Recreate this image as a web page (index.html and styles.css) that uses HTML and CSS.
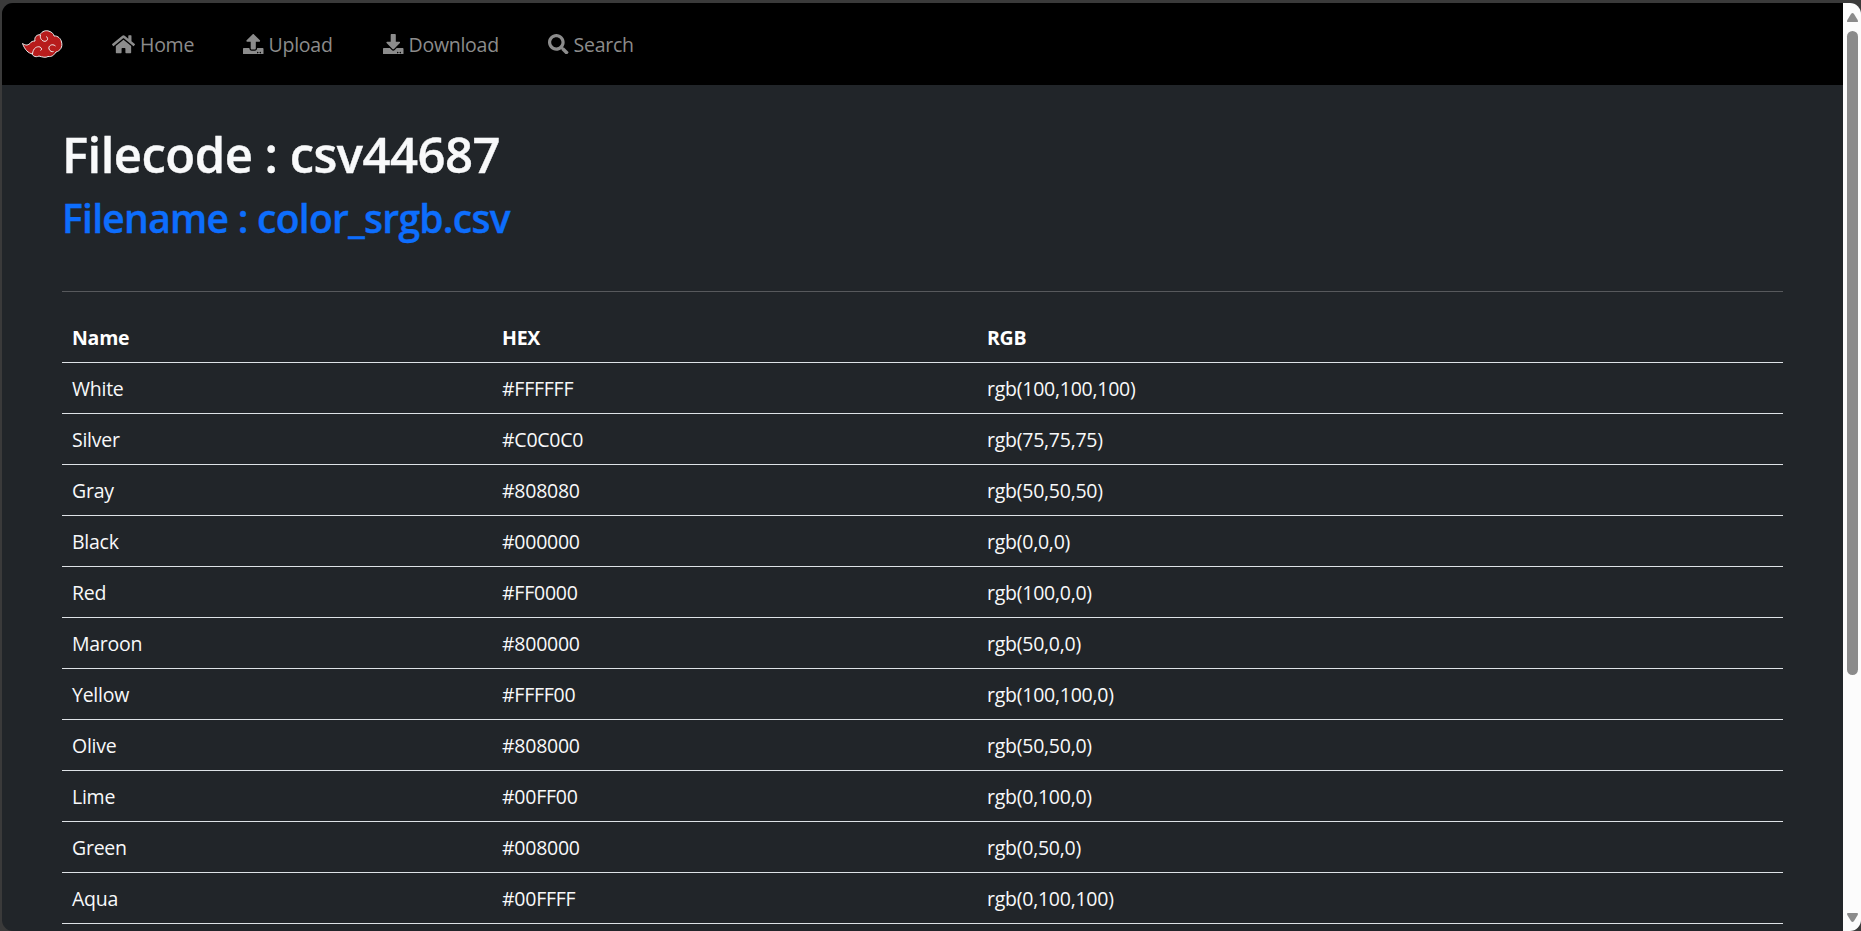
FILE: index.html
```html
<!DOCTYPE html>
<html lang="en">
<head>
<meta charset="utf-8">
<title>color_srgb.csv</title>
<link rel="stylesheet" href="styles.css">
</head>
<body>
<div class="window">
  <div class="page">
    <nav class="navbar">
      <a class="brand"><svg viewBox="0 0 41 28"><path class="cloud" d="M.5 13.500C3 15 5 16 8 13.500C9 11.500 11 11 13 11C12 7 15 4.500 18 4.800C20 1 24 0 27 1.200C30 2 32 4.500 32 6C36 5.500 39 9 39.500 12C41 17 38 21 34 22C32 25 30 27 26 26.500C24 28 20 27 17 26C13 28 10 25 10.500 24C6 23 3 20 .5 13.500Z"/><path class="swirl" d="M18.500 5C17.500 8 20 11.500 23 11.300C26 11 26.500 7.500 24 6.500M10.500 24C11 18 15 16 18 17C20 18 20 20 18.500 20.500M33.500 16C30 13 26 16 27 19C28 21.500 30 22 31.500 21.500"/></svg></a>
      <a class="link home"><svg viewBox="0 0 576 512"><path d="M280.370 148.260L96 300.110V464a16 16 0 0 0 16 16l112.060-.290a16 16 0 0 0 15.920-16V368a16 16 0 0 1 16-16h64a16 16 0 0 1 16 16v95.640a16 16 0 0 0 16 16.050L464 480a16 16 0 0 0 16-16V300L295.670 148.260a12.190 12.190 0 0 0-15.300 0zM571.600 251.470L488 182.560V44.050a12 12 0 0 0-12-12h-56a12 12 0 0 0-12 12v72.610L318.470 43a48 48 0 0 0-61 0L4.340 251.470a12 12 0 0 0-1.600 16.900l25.500 31A12 12 0 0 0 45.150 301l235.220-193.740a12.190 12.190 0 0 1 15.300 0L530.900 301a12 12 0 0 0 16.900-1.600l25.500-31a12 12 0 0 0-1.700-16.930z"/></svg><span>Home</span></a>
      <a class="link upload"><svg viewBox="0 0 512 512"><path d="M296 384h-80c-13.300 0-24-10.700-24-24V192h-87.700c-17.800 0-26.700-21.500-14.100-34.100L242.300 5.700c7.500-7.500 19.800-7.500 27.300 0l152.200 152.200c12.600 12.600 3.700 34.100-14.100 34.100H320v168c0 13.300-10.700 24-24 24zm216-8v112c0 13.300-10.700 24-24 24H24c-13.300 0-24-10.700-24-24V376c0-13.300 10.700-24 24-24h136v8c0 30.900 25.100 56 56 56h80c30.900 0 56-25.100 56-56v-8h136c13.300 0 24 10.700 24 24zm-124 88c0-11-9-20-20-20s-20 9-20 20 9 20 20 20 20-9 20-20zm64 0c0-11-9-20-20-20s-20 9-20 20 9 20 20 20 20-9 20-20z"/></svg><span>Upload</span></a>
      <a class="link download"><svg viewBox="0 0 512 512"><path d="M216 0h80c13.300 0 24 10.700 24 24v168h87.700c17.800 0 26.700 21.500 14.100 34.100L269.700 378.300c-7.500 7.500-19.800 7.500-27.300 0L90.100 226.100c-12.600-12.600-3.700-34.100 14.100-34.100H192V24c0-13.300 10.700-24 24-24zm296 376v112c0 13.300-10.700 24-24 24H24c-13.300 0-24-10.700-24-24V376c0-13.300 10.700-24 24-24h146.700l49 49c20.100 20.100 52.500 20.100 72.600 0l49-49H488c13.300 0 24 10.700 24 24zm-124 88c0-11-9-20-20-20s-20 9-20 20 9 20 20 20 20-9 20-20zm64 0c0-11-9-20-20-20s-20 9-20 20 9 20 20 20 20-9 20-20z"/></svg><span>Download</span></a>
      <a class="link search"><svg viewBox="0 0 512 512"><path d="M505 442.700L405.300 343c-4.500-4.500-10.600-7-17-7H372c27.600-35.300 44-79.700 44-128C416 93.100 322.900 0 208 0S0 93.100 0 208s93.100 208 208 208c48.300 0 92.700-16.400 128-44v16.300c0 6.400 2.500 12.500 7 17l99.700 99.700c9.400 9.400 24.600 9.400 33.900 0l28.300-28.300c9.400-9.400 9.400-24.600.1-34zM208 336c-70.700 0-128-57.200-128-128 0-70.700 57.200-128 128-128 70.700 0 128 57.200 128 128 0 70.700-57.200 128-128 128z"/></svg><span>Search</span></a>
    </nav>
    <main class="content">
      <h1>Filecode : csv44687</h1>
      <h2>Filename : color_srgb.csv</h2>
      <hr>
      <table>
        <thead><tr><th class="name">Name</th><th class="hex">HEX</th><th>RGB</th></tr></thead>
        <tbody>
          <tr><td>White</td><td>#FFFFFF</td><td>rgb(100,100,100)</td></tr>
          <tr><td>Silver</td><td>#C0C0C0</td><td>rgb(75,75,75)</td></tr>
          <tr><td>Gray</td><td>#808080</td><td>rgb(50,50,50)</td></tr>
          <tr><td>Black</td><td>#000000</td><td>rgb(0,0,0)</td></tr>
          <tr><td>Red</td><td>#FF0000</td><td>rgb(100,0,0)</td></tr>
          <tr><td>Maroon</td><td>#800000</td><td>rgb(50,0,0)</td></tr>
          <tr><td>Yellow</td><td>#FFFF00</td><td>rgb(100,100,0)</td></tr>
          <tr><td>Olive</td><td>#808000</td><td>rgb(50,50,0)</td></tr>
          <tr><td>Lime</td><td>#00FF00</td><td>rgb(0,100,0)</td></tr>
          <tr><td>Green</td><td>#008000</td><td>rgb(0,50,0)</td></tr>
          <tr><td>Aqua</td><td>#00FFFF</td><td>rgb(0,100,100)</td></tr>
        </tbody>
      </table>
    </main>
  </div>
  <div class="scrollbar">
    <svg viewBox="0 0 11 9"><path d="M5.500 0Q6.200 0 7 1L10.700 7Q11.500 9 10 9H1Q-.5 9 .3 7L4 1Q4.800 0 5.500 0Z"/></svg>
    <div class="thumb"></div>
    <svg class="down" viewBox="0 0 11 9"><path d="M5.500 0Q6.200 0 7 1L10.700 7Q11.500 9 10 9H1Q-.5 9 .3 7L4 1Q4.800 0 5.500 0Z"/></svg>
  </div>
</div>
</body>
</html>
```
FILE: styles.css
```css
* { box-sizing: border-box; }
body {
  margin: 0;
  height: 931px;
  padding: 3px 0 0 2px;
  overflow: hidden;
  background: #3a3a3a;
  font: 19.5px/30px "Open Sans", "Noto Sans", sans-serif;
  letter-spacing: -0.250px;
  color: #f8f9fa;
}
.window {
  display: flex;
  height: 928px;
  border-radius: 11px;
  overflow: hidden;
  background: #212529;
}
.page { flex: none; width: 1841px; }
.navbar {
  display: flex;
  align-items: center;
  height: 82px;
  padding-left: 20px;
  background: #000;
  color: #8c8c8c;
}
.brand { display: flex; width: 90px; }
.brand svg { width: 41px; height: 28px; }
.cloud { fill: #b71c1c; stroke: #eee; stroke-width: 1; }
.swirl { fill: none; stroke: #eee; stroke-width: 1; }
.link { display: flex; align-items: center; gap: 5px; }
.link svg { width: 20.500px; height: 20.500px; fill: currentColor; }
.link span { padding-top: 2px; }
.link.home { width: 131px; }
.link.home svg { width: 23px; }
.link.upload { width: 140px; }
.link.download { width: 165px; }
.content { padding: 39px 60px 0; }
h1, h2 { margin: 0; font-weight: 600; -webkit-text-stroke: 0.400px currentColor; }
h1 { font-size: 49px; line-height: 60px; letter-spacing: -0.530px; }
h2 {
  margin-top: 10px;
  font-size: 39px;
  line-height: 48px;
  letter-spacing: -0.720px;
  color: #0d6efd;
}
hr { height: 1px; margin: 49px 0 20px; border: 0; background: #57595c; }
table { width: 1721px; table-layout: fixed; border-collapse: separate; border-spacing: 0; }
th, td { height: 51px; padding: 11px 10px 9px; border-bottom: 1px solid #dee2e6; text-align: left; }
th { font-weight: 700; color: #fff; }
.name { width: 430px; }
.hex { width: 485px; }
.scrollbar {
  display: flex;
  flex-direction: column;
  align-items: center;
  width: 18px;
  padding: 10px 0 9px;
  background: #fcfcfc;
}
.scrollbar svg { width: 11px; height: 9px; fill: #8b8b8b; }
.thumb { width: 11px; height: 644px; margin-top: 9px; border-radius: 6px; background: #8b8b8b; }
.scrollbar .down { margin-top: auto; transform: rotate(180deg); }
```
